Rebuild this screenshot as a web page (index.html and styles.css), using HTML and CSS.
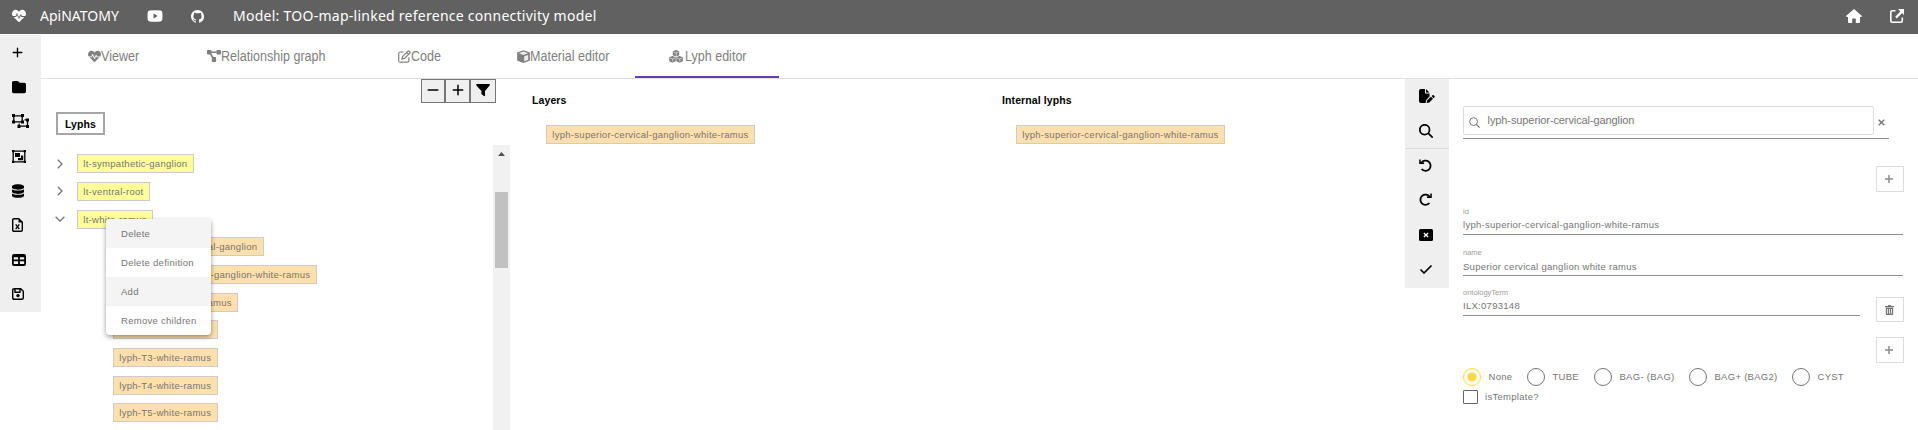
FILE: index.html
```html
<!DOCTYPE html>
<html lang="en">
<head>
<meta charset="utf-8">
<title>ApiNATOMY</title>
<link rel="stylesheet" href="styles.css">
</head>
<body>
<svg class="defs" aria-hidden="true">
  <symbol id="heart" viewBox="0 0 512 512"><path d="M320.2 243.8l-49.7 99.4c-6 12.1-23.4 11.7-28.9-.6l-56.9-126.3-30 71.7H60.6l182.5 186.5c7.1 7.3 18.6 7.3 25.7 0L451.4 288H342.3l-22.1-44.2zM473.7 73.9l-2.4-2.5c-51.5-52.6-135.8-52.6-187.4 0L256 100l-27.9-28.5c-51.5-52.7-135.9-52.7-187.4 0l-2.4 2.4C-10.4 123.7-12.5 203 31 256h102.4l35.9-86.2c5.4-12.9 23.6-13.1 29.3-.4l58.2 129.3 49-97.9c5.9-11.8 22.7-11.8 28.6 0l27.6 55.2H481c43.5-53 41.4-132.3-7.3-182.1z"/></symbol>
  <symbol id="youtube" viewBox="0 0 16 14"><path fill-rule="evenodd" d="M2.5 1.6Q8 1 13.500 1.600Q15 1.800 15.300 3.200Q15.700 7 15.300 10.800Q15 12.200 13.500 12.400Q8 13 2.500 12.400Q1 12.200 .7 10.800Q.3 7 .7 3.200Q1 1.800 2.500 1.600zM6.500 4.600v4.800l4.200-2.400z"/></symbol>
  <symbol id="github" viewBox="0 0 16 16"><path d="M8 0C3.58 0 0 3.58 0 8c0 3.54 2.29 6.53 5.47 7.59.4.07.55-.17.55-.38 0-.19-.01-.82-.01-1.49-2.01.37-2.53-.49-2.69-.94-.09-.23-.48-.94-.82-1.13-.28-.15-.68-.52-.01-.53.63-.01 1.08.58 1.23.82.72 1.21 1.87.87 2.33.66.07-.52.28-.87.51-1.07-1.78-.2-3.64-.89-3.64-3.95 0-.87.31-1.59.82-2.15-.08-.2-.36-1.02.08-2.12 0 0 .67-.21 2.2.82.64-.18 1.32-.27 2-.27s1.36.09 2 .27c1.53-1.04 2.2-.82 2.2-.82.44 1.1.16 1.92.08 2.12.51.56.82 1.27.82 2.15 0 3.07-1.87 3.75-3.65 3.95.29.25.54.73.54 1.48 0 1.07-.01 1.93-.01 2.2 0 .21.15.46.55.38A8.01 8.01 0 0 0 16 8c0-4.42-3.58-8-8-8z"/></symbol>
  <symbol id="home" viewBox="0 0 16 14"><path d="M8 0l8 7-.8.9H14V13q0 1-1 1H9.800V9.500H6.200V14H3q-1 0-1-1V7.900H.8L0 7z"/></symbol>
  <symbol id="external" viewBox="0 0 14 14"><path d="M5.500 1.700H2.200Q.8 1.700.8 3.100v8.700q0 1.400 1.400 1.400h8.700q1.400 0 1.400-1.400V8.500" fill="none" stroke="currentColor" stroke-width="1.600"/><path d="M8 0h6v6l-1.900-1.900-5.300 5.300-1.600-1.600 5.200-5.300z"/></symbol>
  <symbol id="plus" viewBox="0 0 448 512"><path d="M252 80c0-15-12-28-28-28s-28 12-28 28V228H48c-15 0-28 12-28 28s12 28 28 28H196V432c0 15 12 28 28 28s28-12 28-28V284H400c15 0 28-12 28-28s-12-28-28-28H252V80z"/></symbol>
  <symbol id="minus" viewBox="0 0 448 512"><rect x="16" y="226" width="416" height="60" rx="30"/></symbol>
  <symbol id="filter" viewBox="0 0 14 14"><path d="M.8 1h12.400q1 .4.4 1.500L9 8v4.600q-.2.900-1 .5L5.400 11V8L.4 2.500Q-.2 1.400.8 1z"/></symbol>
  <symbol id="folder" viewBox="0 0 512 512"><path d="M64 480H448c35.300 0 64-28.700 64-64V160c0-35.300-28.700-64-64-64H288c-10.100 0-19.600-4.700-25.600-12.800L243.200 57.600C231.100 41.500 212.100 32 192 32H64C28.700 32 0 60.700 0 96V416c0 35.300 28.700 64 64 64z"/></symbol>
  <symbol id="ungroup" viewBox="0 0 18 14"><g fill="none" stroke="currentColor" stroke-width="1.300"><path d="M1.800 1.800h8.400v6H1.800zM12.500 5.800h3v6.400H7.200V9.500"/></g><path d="M0 0h3v3H0zM9 0h3v3H9zM0 6.500h3v3H0zM9 6.500h3v3H9zM14 4.500h3v3h-3zM14 11h3v3h-3zM5.500 11h3v3h-3z"/></symbol>
  <symbol id="group" viewBox="0 0 14 13"><path fill="none" stroke="currentColor" stroke-width="1.300" d="M1.200 1.200h11.600v10.600H1.200z"/><path d="M0 0h2.300v2.300H0zM11.700 0H14v2.300h-2.300zM0 10.700h2.300V13H0zM11.700 10.700H14V13h-2.300zM3 3h5v4H3zM9 5.500h2.200v4.700H6V8h3z"/></symbol>
  <symbol id="database" viewBox="0 0 448 512"><path d="M448 80v48c0 44.200-100.300 80-224 80S0 172.200 0 128V80C0 35.800 100.300 0 224 0S448 35.800 448 80zM393.200 214.700c20.800-7.400 39.900-16.900 54.800-28.600V288c0 44.200-100.300 80-224 80S0 332.200 0 288V186.100c14.900 11.800 34 21.200 54.800 28.600C99.700 230.700 159.500 240 224 240s124.300-9.300 169.200-25.300zM0 346.100c14.900 11.800 34 21.200 54.800 28.600C99.700 390.700 159.500 400 224 400s124.300-9.300 169.200-25.300c20.800-7.400 39.900-16.900 54.800-28.600V432c0 44.200-100.300 80-224 80S0 476.200 0 432V346.100z"/></symbol>
  <symbol id="excel" viewBox="0 0 11 14"><path fill="none" stroke="currentColor" stroke-width="1.400" d="M2 .7h4.800l3.500 3.500V12q0 1.300-1.300 1.300H2Q.7 13.300.7 12V2Q.7.7 2 .7z"/><path d="M6.500.5V4.500h4z"/><path fill="none" stroke="currentColor" stroke-width="1.300" d="M3.700 6.300l3.600 4.900M7.300 6.300l-3.600 4.900"/></symbol>
  <symbol id="table" viewBox="0 0 14 12"><path fill-rule="evenodd" d="M2 0h10q2 0 2 2v8q0 2-2 2H2q-2 0-2-2V2q0-2 2-2zM1.800 3.200v2.400h4.300V3.200zM7.900 3.200v2.400h4.300V3.200zM1.800 7.300v2.800h4.300V7.300zM7.900 7.300v2.800h4.300V7.300z"/></symbol>
  <symbol id="save" viewBox="0 0 12 12"><path fill="none" stroke="currentColor" stroke-width="1.400" d="M2.200.7h6.500l2.600 2.600v6.500q0 1.500-1.500 1.500H2.200Q.7 11.300.7 9.800V2.200Q.7.7 2.200.7zM3 1v3.200h5V1"/><circle cx="6" cy="7.600" r="1.700"/></symbol>
  <symbol id="graph" viewBox="0 0 14 12"><path d="M.7 0h3.100q.7 0 .7.700v.9h5V.7q0-.7.700-.7h3.100q.7 0 .7.700v3.100q0 .7-.7.700h-3.100q-.7 0-.7-.7V3h-5l-.1.800 2 3.200h2q.7 0 .7.700v3.500q0 .8-.7.800H5.500q-.7 0-.7-.8V7.400L3.100 4.500H.7Q0 4.500 0 3.800V.7Q0 0 .7 0z"/></symbol>
  <symbol id="edit" viewBox="0 0 13 13"><path fill="none" stroke="currentColor" stroke-width="1.200" d="M5.500 2H2.200Q.7 2 .7 3.500v7.200q0 1.500 1.500 1.500h7.200q1.500 0 1.500-1.500V7.500M4 9l.6-2.500L10 1.100q.5-.5 1 0l.9.9q.5.500 0 1L6.500 8.400zM8.700 2.500l1.800 1.800"/></symbol>
  <symbol id="cube" viewBox="0 0 13 13"><path d="M6.500.2l5.900 2.100q.5.200.5.700v7q0 .5-.5.800l-5.900 2.100-5.900-2.100Q.1 10.500.1 10V3q0-.5.5-.7z"/><path d="M7.200 6.300v4.900l4-1.500V4.900zM1.900 3.200l4.600 1.700 4.600-1.700-4.600-1.600z" fill="#fff" fill-opacity=".85"/></symbol>
  <symbol id="cubes" viewBox="0 0 14 13"><path d="M7 0l3.200 1.300v4L7 6.600 3.800 5.300v-4zM3.500 6l3.200 1.300v4l-3.200 1.400-3.300-1.400v-4zM10.500 6l3.300 1.300v4l-3.300 1.400-3.200-1.400v-4z"/><path fill="none" stroke="#fff" stroke-width=".6" d="M4.600 2L7 3l2.400-1M7.300 3v2.800M1 8l2.500 1L6 8M3.800 9v2.800M8 8l2.500 1L13 8M10.800 9v2.800"/></symbol>
  <symbol id="right" viewBox="0 0 6 10"><path fill="none" stroke="currentColor" stroke-width="1.300" d="M.8.8L5 5 .8 9.200"/></symbol>
  <symbol id="down" viewBox="0 0 10 6"><path fill="none" stroke="currentColor" stroke-width="1.300" d="M.6.7L5 5 9.400.7"/></symbol>
  <symbol id="filepen" viewBox="0 0 16 14"><path d="M2 0h4v4.500h4.500v3L7.300 10.800 6.600 14H2q-2 0-2-2V2q0-2 2-2zM7 0l3.500 3.500H7zM13.400 6.200q.7-.5 1.300 0l.8.800q.5.600 0 1.300l-.9.900-2.100-2.100zM11.900 7.700l2.100 2.100-3.700 3.600-2.700.5.600-2.600z"/></symbol>
  <symbol id="search" viewBox="0 0 512 512"><path fill-rule="evenodd" d="M416 208c0 45.900-14.900 88.300-40 122.700L502.600 457.400c12.500 12.500 12.500 32.800 0 45.300s-32.800 12.500-45.300 0L330.700 376c-34.400 25.200-76.800 40-122.700 40C93.100 416 0 322.900 0 208S93.100 0 208 0S416 93.100 416 208zM208 352a144 144 0 1 0 0-288 144 144 0 1 0 0 288z"/></symbol>
  <symbol id="undo" viewBox="0 0 13 13"><path fill="none" stroke="currentColor" stroke-width="1.800" d="M2.300 3.800A5.100 5.100 0 1 1 2.600 10"/><path d="M.2.600l1.500-.1v2.800l3.400.1V5H.2z"/></symbol>
  <symbol id="redo" viewBox="0 0 13 13"><path fill="none" stroke="currentColor" stroke-width="1.800" d="M10.700 3.800A5.100 5.100 0 1 0 10.400 10"/><path d="M12.800.6l-1.500-.1v2.800l-3.400.1V5h4.900z"/></symbol>
  <symbol id="xmark" viewBox="0 0 14 12"><rect width="14" height="12" rx="1.500"/><path fill="none" stroke="#fff" stroke-width="1.400" d="M4.900 3.900l4.200 4.200M9.100 3.900L4.900 8.100"/></symbol>
  <symbol id="check" viewBox="0 0 12 9"><path fill="none" stroke="currentColor" stroke-width="1.700" stroke-linecap="round" d="M1 5l3 3 7-7"/></symbol>
  <symbol id="lens" viewBox="0 0 11 11"><circle cx="4.600" cy="4.600" r="3.900" fill="none" stroke="currentColor"/><path fill="none" stroke="currentColor" stroke-width="1.200" d="M7.400 7.400l3.200 3.200"/></symbol>
  <symbol id="times" viewBox="0 0 7 7"><path fill="none" stroke="currentColor" stroke-width="1.400" d="M.7.7l5.600 5.600M6.300.7L.7 6.300"/></symbol>
  <symbol id="add" viewBox="0 0 8 8"><path fill="none" stroke="currentColor" stroke-width="1.500" d="M4 0v8M0 4h8"/></symbol>
  <symbol id="trash" viewBox="0 0 9 10"><path fill-rule="evenodd" d="M0 1h2.800L3.300 0h2.400l.5 1H9v1.200H0zM.8 2.800h7.400V9q0 1-1 1H1.800q-1 0-1-1zM2.200 4v4.800h.8V4zM4.100 4v4.800h.8V4zM6 4v4.800h.8V4z"/></symbol>
</svg>

<header class="topbar">
  <svg class="tb-heart"><use href="#heart"/></svg>
  <span class="brand">ApiNATOMY</span>
  <svg class="tb-youtube"><use href="#youtube"/></svg>
  <svg class="tb-github"><use href="#github"/></svg>
  <span class="model">Model: TOO-map-linked reference connectivity model</span>
  <svg class="tb-home"><use href="#home"/></svg>
  <svg class="tb-external"><use href="#external"/></svg>
</header>

<div class="shell">
  <nav class="sidebar">
    <div class="side-item"><svg class="i-plus"><use href="#plus"/></svg></div>
    <div class="side-item"><svg class="i-square"><use href="#folder"/></svg></div>
    <div class="side-item"><svg class="i-ungroup"><use href="#ungroup"/></svg></div>
    <div class="side-item"><svg class="i-group"><use href="#group"/></svg></div>
    <div class="side-item"><svg class="i-db"><use href="#database"/></svg></div>
    <div class="side-item"><svg class="i-excel"><use href="#excel"/></svg></div>
    <div class="side-item"><svg class="i-table"><use href="#table"/></svg></div>
    <div class="side-item"><svg class="i-save"><use href="#save"/></svg></div>
  </nav>

  <div class="workspace">
    <div class="tabs">
      <div class="tab t-viewer"><svg class="ti-heart"><use href="#heart"/></svg><span>Viewer</span></div>
      <div class="tab t-graph"><svg class="ti-graph"><use href="#graph"/></svg><span>Relationship graph</span></div>
      <div class="tab t-code"><svg class="ti-edit"><use href="#edit"/></svg><span>Code</span></div>
      <div class="tab t-material"><svg class="ti-cube"><use href="#cube"/></svg><span>Material editor</span></div>
      <div class="tab t-lyph active"><svg class="ti-cubes"><use href="#cubes"/></svg><span>Lyph editor</span></div>
    </div>

    <main class="editor">
      <section class="tree-panel">
        <div class="tree-tools">
          <button class="b1"><svg class="g-minus"><use href="#minus"/></svg></button>
          <button class="b2"><svg class="g-plus"><use href="#plus"/></svg></button>
          <button class="b3"><svg class="g-filter"><use href="#filter"/></svg></button>
        </div>
        <h2 class="tree-title">Lyphs</h2>
        <div class="tree-body">
          <div class="tree">
            <div class="row"><span class="arrow"><svg class="a-right"><use href="#right"/></svg></span><span class="chip template">lt-sympathetic-ganglion</span></div>
            <div class="row"><span class="arrow"><svg class="a-right"><use href="#right"/></svg></span><span class="chip template">lt-ventral-root</span></div>
            <div class="row"><span class="arrow"><svg class="a-down"><use href="#down"/></svg></span><span class="chip template">lt-white-ramus</span>
              <div class="menu">
                <div class="menu-item shade">Delete</div>
                <div class="menu-item">Delete definition</div>
                <div class="menu-item shade">Add</div>
                <div class="menu-item">Remove children</div>
              </div>
            </div>
            <div class="row child"><span class="chip">lyph-superior-cervical-ganglion</span></div>
            <div class="row child"><span class="chip">lyph-inferior-cervical-ganglion-white-ramus</span></div>
            <div class="row child"><span class="chip">lyph-stellate-white-ramus</span></div>
            <div class="row child"><span class="chip">lyph-T2-white-ramus</span></div>
            <div class="row child"><span class="chip">lyph-T3-white-ramus</span></div>
            <div class="row child"><span class="chip">lyph-T4-white-ramus</span></div>
            <div class="row child"><span class="chip">lyph-T5-white-ramus</span></div>
          </div>
          <div class="scrollbar"><div class="scroll-up"></div><div class="scroll-thumb"></div></div>
        </div>
      </section>

      <section class="list layers">
        <h3>Layers</h3>
        <span class="chip">lyph-superior-cervical-ganglion-white-ramus</span>
      </section>
      <section class="list internal">
        <h3>Internal lyphs</h3>
        <span class="chip">lyph-superior-cervical-ganglion-white-ramus</span>
      </section>

      <aside class="toolbar">
        <div class="tool"><svg class="r-file"><use href="#filepen"/></svg></div>
        <div class="tool"><svg class="i-square"><use href="#search"/></svg></div>
        <div class="tool ruled"><svg class="r-turn"><use href="#undo"/></svg></div>
        <div class="tool"><svg class="r-turn"><use href="#redo"/></svg></div>
        <div class="tool"><svg class="r-x"><use href="#xmark"/></svg></div>
        <div class="tool"><svg class="r-check"><use href="#check"/></svg></div>
      </aside>

      <form class="form">
        <div class="search-row">
          <div class="search-box"><svg class="lens"><use href="#lens"/></svg><span>lyph-superior-cervical-ganglion</span></div>
          <svg class="clear"><use href="#times"/></svg>
        </div>
        <div class="action first"><svg class="add"><use href="#add"/></svg></div>
        <div class="field f-id"><label>id</label><span>lyph-superior-cervical-ganglion-white-ramus</span></div>
        <div class="field f-name"><label>name</label><span>Superior cervical ganglion white ramus</span></div>
        <div class="term-row">
          <div class="field f-term"><label>ontologyTerm</label><span>ILX:0793148</span></div>
          <div class="action bin"><svg class="trash"><use href="#trash"/></svg></div>
        </div>
        <div class="action second"><svg class="add"><use href="#add"/></svg></div>
        <div class="radios">
          <div class="radio none on"><i></i>None</div>
          <div class="radio tube"><i></i>TUBE</div>
          <div class="radio bag"><i></i>BAG- (BAG)</div>
          <div class="radio bag2"><i></i>BAG+ (BAG2)</div>
          <div class="radio"><i></i>CYST</div>
        </div>
        <div class="check"><i></i>isTemplate?</div>
      </form>
    </main>
  </div>
</div>
</body>
</html>
```
FILE: styles.css
```css
* { box-sizing: border-box; }
body {
  margin: 0;
  height: 430px;
  overflow: hidden;
  background: #fff;
  color: #757575;
  font: 9.500px/12px "Liberation Sans", Arial, sans-serif;
  letter-spacing: .28px;
}
svg { display: block; flex: none; fill: currentColor; overflow: visible; }
.defs { position: absolute; width: 0; height: 0; }

/* top bar */
.topbar {
  display: flex;
  align-items: center;
  height: 34px;
  padding: 0 14px 2px 12px;
  background: #616161;
  color: #fff;
  font: 14px/20px "Noto Sans", sans-serif;
  letter-spacing: 0;
  white-space: nowrap;
}
.tb-heart { width: 14px; height: 14px; }
.brand { width: 107px; padding-left: 14px; }
.tb-youtube { width: 16px; height: 14px; margin-left: 14px; }
.tb-github { width: 13px; height: 13px; margin-left: 28px; }
.model { margin-left: 29px; letter-spacing: .26px; }
.tb-home { width: 16px; height: 14px; margin-left: auto; }
.tb-external { width: 14px; height: 14px; margin-left: 28px; }

.shell { display: flex; height: 396px; align-items: flex-start; }

/* left icon bar */
.sidebar {
  width: 41px;
  height: 277px;
  margin-top: 1px;
  background: #efefef;
  color: #000;
}
.side-item { display: flex; align-items: center; height: 34.6px; padding-left: 12px; }
.i-plus { width: 11px; height: 13px; }
.i-square { width: 14px; height: 14px; }
.i-ungroup { width: 18px; height: 14px; }
.i-group { width: 14px; height: 13px; }
.i-db { width: 12px; height: 14px; }
.i-excel { width: 11px; height: 14px; }
.i-table { width: 14px; height: 12px; }
.i-save { width: 12px; height: 12px; }

/* tabs */
.workspace { flex: 1; height: 396px; }
.tabs { display: flex; height: 45px; border-bottom: 1px solid #e0e0e0; }
.tab {
  display: flex;
  align-items: center;
  height: 44px;
  color: #808080;
  font-size: 14px;
  line-height: 18px;
  letter-spacing: 0;
  white-space: nowrap;
}
.tab span { margin-bottom: 1px; transform: scaleX(.895); transform-origin: 0 50%; }
.t-viewer { width: 145px; padding-left: 47px; }
.t-graph { width: 160px; padding-left: 21px; }
.t-code { width: 147px; padding-left: 52px; }
.t-material { width: 142px; padding-left: 24px; }
.t-lyph { width: 144px; padding-left: 34px; }
.active { border-bottom: 2px solid #673ab7; padding-top: 2px; }
.ti-heart { width: 13px; height: 13px; }
.ti-graph { width: 14px; height: 12px; }
.ti-edit { width: 13px; height: 13px; }
.ti-cube { width: 13px; height: 13px; }
.ti-cubes { width: 14px; height: 13px; margin-right: 2px; }

/* editor columns */
.editor { display: flex; height: 351px; align-items: flex-start; }

.tree-panel { width: 469px; height: 351px; }
.tree-tools { display: flex; height: 24px; padding-left: 380px; }
.tree-tools button {
  display: flex;
  align-items: center;
  justify-content: center;
  height: 24px;
  padding: 0 0 2px;
  border: 1px solid #767676;
  background: #efefef;
  color: #000;
}
.b1 { width: 24px; }
.b2 { width: 25px; }
.b3 { width: 26px; }
.g-minus, .g-plus { width: 12px; height: 14px; }
.g-filter { width: 14px; height: 14px; }
.tree-title {
  width: 49px;
  height: 23px;
  margin: 9px 0 0 15px;
  padding-left: 7px;
  border: 2px solid #a6a6a6;
  color: #000;
  font-size: 10.500px;
  line-height: 20px;
  letter-spacing: .1px;
}
.tree-body { display: flex; height: 285px; margin-top: 10px; }
.tree { width: 452px; padding-top: 4.8px; }
.row { position: relative; display: flex; align-items: center; height: 27.7px; }
.arrow { display: flex; justify-content: center; width: 36px; padding-left: 1px; }
.a-right { width: 6px; height: 10px; }
.a-down { width: 10px; height: 6px; }
.child { padding-left: 72px; }
.chip {
  height: 19px;
  padding: 0 5.300px;
  border: 1px solid #ccc;
  background: #ffe0ad;
  color: #757575;
  line-height: 17px;
  white-space: nowrap;
}
.template { background: #ffff99; }

.menu {
  position: absolute;
  z-index: 1;
  top: 14.300px;
  left: 65px;
  width: 105px;
  border-radius: 4px;
  overflow: hidden;
  background: #fff;
  box-shadow: 0 2px 5px rgba(0, 0, 0, .4);
}
.menu-item { height: 29px; padding-left: 15px; line-height: 29px; white-space: nowrap; }
.shade { background: #f4f4f4; }

.scrollbar { width: 17px; height: 285px; padding: 7px 2px 0; background: #f1f1f1; }
.scroll-up {
  width: 7px;
  height: 4px;
  margin: 0 3px;
  background: #505050;
  clip-path: polygon(50% 0, 100% 100%, 0 100%);
}
.scroll-thumb { height: 76px; margin-top: 36px; background: #c1c1c1; }

.list { display: flex; flex-direction: column; align-items: flex-start; padding-top: 14px; }
.list h3 {
  margin: 0 0 18px -14px;
  color: #000;
  font-size: 10.500px;
  line-height: 14px;
  letter-spacing: .1px;
}
.layers { width: 470px; padding-left: 36px; }
.internal { width: 425px; padding-left: 36px; }

/* right icon bar */
.toolbar { width: 44px; height: 209px; background: #efefef; color: #000; }
.tool { display: flex; align-items: center; height: 34.700px; padding-left: 14px; }
.ruled { border-top: 1px solid #dcdcdc; }
.r-file { width: 16px; height: 14px; }
.r-turn { width: 13px; height: 13px; margin-bottom: 1px; }
.r-x { width: 14px; height: 12px; }
.r-check { width: 12px; height: 9px; margin-left: 1px; }

/* form */
.form { display: flex; flex-direction: column; width: 455px; padding: 27px 0 0 14px; }
.search-row {
  display: flex;
  width: 426px;
  height: 33px;
  border-bottom: 1px solid #8f8f8f;
}
.search-box {
  display: flex;
  width: 411px;
  height: 29px;
  padding-left: 5px;
  border: 1px solid #dedede;
  border-radius: 2px;
  font-size: 11px;
  line-height: 27px;
  letter-spacing: -.1px;
}
.lens { width: 11px; height: 11px; margin: 10px 7px 0 0; }
.search-box span { margin-left: .6px; }
.clear { width: 7px; height: 7px; margin: 13px 0 0 4px; }
.action {
  display: flex;
  align-items: center;
  justify-content: center;
  width: 28px;
  height: 26px;
  border: 1px solid #dedede;
}
.add { width: 8px; height: 8px; color: #8c8c8c; margin-right: 2px; }
.trash { width: 9px; height: 10px; margin-right: 1px; }
.first { margin: 27px 0 0 413px; }
.field {
  display: flex;
  flex-direction: column;
  border-bottom: 1px solid #8f8f8f;
}
.field label { height: 9px; color: #9e9e9e; font-size: 7.500px; line-height: 9px; letter-spacing: 0; }
.field span { height: 12px; }
.f-id { width: 440px; height: 28px; margin-top: 15px; }
.f-id span { margin-top: 3px; }
.f-name { width: 440px; height: 28px; margin-top: 13px; }
.f-name span { margin-top: 4px; }
.term-row { display: flex; height: 35px; margin-top: 12px; }
.f-term { width: 397px; height: 28px; }
.f-term span { margin-top: 3px; }
.bin { height: 25px; margin: 9px 0 0 16px; }
.second { margin: 14px 0 0 413px; }
.radios { display: flex; height: 18px; margin-top: 5px; white-space: nowrap; }
.radio { display: flex; line-height: 18px; }
.radio i {
  flex: none;
  width: 18px;
  height: 18px;
  margin-right: 7.500px;
  border: 1.500px solid #757575;
  border-radius: 50%;
}
.on i { border-color: #ffd740; background: radial-gradient(circle, #ffd740 4.200px, #fff 4.900px); }
.none { width: 64px; }
.tube { width: 67px; }
.bag { width: 95px; }
.bag2 { width: 103px; }
.check { display: flex; margin-top: 4px; line-height: 14px; }
.check i { width: 15px; height: 14px; margin-right: 7px; border: 1px solid #666; border-radius: 1px; }
```
